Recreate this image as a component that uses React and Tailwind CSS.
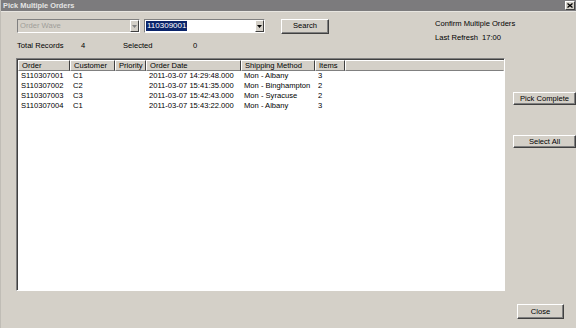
const rows = [
  { order: 'S110307001', customer: 'C1', priority: '', date: '2011-03-07 14:29:48.000', ship: 'Mon - Albany', items: '3' },
  { order: 'S110307002', customer: 'C2', priority: '', date: '2011-03-07 15:41:35.000', ship: 'Mon - Binghampton', items: '2' },
  { order: 'S110307003', customer: 'C3', priority: '', date: '2011-03-07 15:42:43.000', ship: 'Mon - Syracuse', items: '2' },
  { order: 'S110307004', customer: 'C1', priority: '', date: '2011-03-07 15:43:22.000', ship: 'Mon - Albany', items: '3' },
]

const cols = [
  { key: 'order', label: 'Order', w: 'w-[52px]' },
  { key: 'customer', label: 'Customer', w: 'w-[45px]' },
  { key: 'priority', label: 'Priority', w: 'w-[31px]' },
  { key: 'date', label: 'Order Date', w: 'w-[95px]' },
  { key: 'ship', label: 'Shipping Method', w: 'w-[74px]' },
  { key: 'items', label: 'Items', w: 'w-[30px]' },
]

function Button({ children, className = '' }) {
  return (
    <div
      className={
        'flex items-center justify-center bg-[#d4d0c8] border border-t-white border-l-white border-b-[#404040] border-r-[#404040] shadow-[inset_-1px_-1px_0_#808080] text-black ' +
        className
      }
    >
      {children}
    </div>
  )
}

function Arrow({ disabled }) {
  return (
    <div className="w-[9px] h-full flex items-center justify-center bg-[#d4d0c8] border border-t-white border-l-white border-b-[#404040] border-r-[#404040]">
      <svg width="5" height="3" viewBox="0 0 5 3">
        <path d="M0 0h5L2.5 3z" fill={disabled ? '#808080' : '#000'} />
      </svg>
    </div>
  )
}

export default function App() {
  return (
    <div
      className="w-[576px] h-[328px] bg-[#d4d0c8] flex flex-col text-[7.6px] leading-[10px] text-black overflow-hidden border-l border-[#c0bdb6]"
      style={{ fontFamily: '"Liberation Sans", Arial, sans-serif' }}
    >
      {/* title bar */}
      <div className="h-[12px] bg-[#7c7b7d] flex items-center justify-between pl-[2px] pr-[1px] border-b border-[#e8e6e1]">
        <span className="text-[#e4e4e4] font-bold text-[7.4px]">Pick Multiple Orders</span>
        <div className="w-[10px] h-[9px] bg-[#d4d0c8] border border-t-white border-l-white border-b-[#404040] border-r-[#404040] flex items-center justify-center">
          <svg width="6" height="5" viewBox="0 0 6 5">
            <path d="M0.5 0.5L5.5 4.5M5.5 0.5L0.5 4.5" stroke="#000" strokeWidth="1.3" />
          </svg>
        </div>
      </div>

      {/* header area */}
      <div className="flex h-[46px] pl-[16px]">
        <div className="flex flex-col w-[418px] pt-[7px]">
          <div className="flex items-center h-[14px]">
            <div className="w-[123px] h-[14px] flex border border-t-[#808080] border-l-[#808080] border-b-white border-r-white">
              <div className="flex-1 flex items-center pl-[2px] text-[#a09e99] bg-[#d4d0c8]">Order Wave</div>
              <Arrow disabled />
            </div>
            <div className="ml-[4px] w-[121px] h-[14px] flex border border-t-[#808080] border-l-[#808080] border-b-white border-r-white bg-white">
              <div className="flex-1 flex items-center pl-[1px]">
                <span className="bg-[#0a246a] text-white px-[1px] text-[8px]">110309001</span>
              </div>
              <Arrow />
            </div>
            <Button className="ml-[16px] w-[48px] h-[15px]">Search</Button>
          </div>
          <div className="flex mt-[8px]">
            <span className="w-[64px]">Total Records</span>
            <span className="w-[42px]">4</span>
            <span className="w-[70px]">Selected</span>
            <span>0</span>
          </div>
        </div>
        <div className="flex flex-col pt-[7px]">
          <span>Confirm Multiple Orders</span>
          <span className="mt-[4px]">
            Last Refresh<span className="ml-[4px]">17:00</span>
          </span>
        </div>
      </div>

      {/* main */}
      <div className="flex pl-[15px]">
        <div className="w-[490px] h-[233px] bg-white border border-t-[#808080] border-l-[#808080] border-b-white border-r-white flex flex-col">
          <div className="flex h-[12px] border-t border-l border-[#404040] bg-[#d4d0c8]">
            {cols.map((c) => (
              <div
                key={c.key}
                className={c.w + ' h-full flex items-center pl-[3px] border border-t-white border-l-white border-b-[#808080] border-r-[#404040]'}
              >
                {c.label}
              </div>
            ))}
            <div className="flex-1 h-full border border-t-white border-l-white border-b-[#808080] border-r-[#d4d0c8]" />
          </div>
          <div className="flex-1 border-l border-[#404040] pt-[0px]">
            {rows.map((r) => (
              <div key={r.order} className="flex h-[10px] items-center">
                {cols.map((c) => (
                  <div key={c.key} className={c.w + ' pl-[3px] whitespace-nowrap'}>
                    {r[c.key]}
                  </div>
                ))}
              </div>
            ))}
          </div>
        </div>
        <div className="flex flex-col ml-[8px] pt-[34px] flex-1">
          <Button className="w-[63px] h-[13px]">Pick Complete</Button>
          <Button className="w-[63px] h-[13px] mt-[30px]">Select All</Button>
        </div>
      </div>

      {/* footer */}
      <div className="flex justify-end pr-[12px] pt-[13px]">
        <Button className="w-[47px] h-[15px]">Close</Button>
      </div>
    </div>
  )
}
